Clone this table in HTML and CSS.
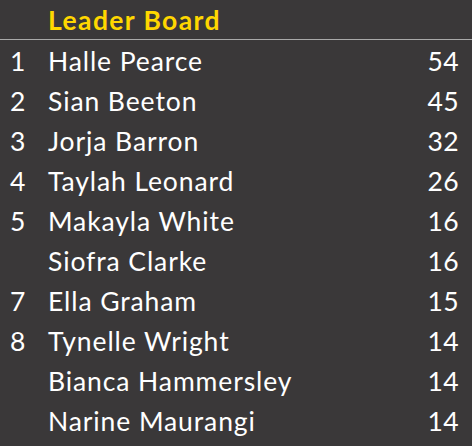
FILE: index.html
```html
<!DOCTYPE html>
<html>
<head>
<meta charset="utf-8">
<link rel="stylesheet" href="styles.css">
</head>
<body>
<div class="board">
  <div class="header"><span class="title">Leader Board</span></div>
  <div class="row"><span class="rank">1</span><span class="name">Halle Pearce</span><span class="score">54</span></div>
  <div class="row"><span class="rank">2</span><span class="name">Sian Beeton</span><span class="score">45</span></div>
  <div class="row"><span class="rank">3</span><span class="name">Jorja Barron</span><span class="score">32</span></div>
  <div class="row"><span class="rank">4</span><span class="name">Taylah Leonard</span><span class="score">26</span></div>
  <div class="row"><span class="rank">5</span><span class="name">Makayla White</span><span class="score">16</span></div>
  <div class="row"><span class="rank"></span><span class="name">Siofra Clarke</span><span class="score">16</span></div>
  <div class="row"><span class="rank">7</span><span class="name">Ella Graham</span><span class="score">15</span></div>
  <div class="row"><span class="rank">8</span><span class="name">Tynelle Wright</span><span class="score">14</span></div>
  <div class="row"><span class="rank"></span><span class="name">Bianca Hammersley</span><span class="score">14</span></div>
  <div class="row"><span class="rank"></span><span class="name">Narine Maurangi</span><span class="score">14</span></div>
</div>
</body>
</html>
```
FILE: styles.css
```css
html, body {
  margin: 0;
  padding: 0;
  background: #3a3839;
}
.board {
  width: 472px;
  height: 446px;
  background: #3a3839;
  font-family: Lato, "Open Sans", sans-serif;
  font-size: 26.5px;
  letter-spacing: 0.9px;
  color: #ffffff;
}
.header {
  height: 39px;
  border-bottom: 1px solid #a9a9a9;
  box-sizing: content-box;
  display: flex;
  align-items: center;
  padding-left: 48px;
  padding-top: 1px;
  box-sizing: border-box;
  height: 40px;
}
.title {
  color: #ffd700;
  font-weight: bold;
  letter-spacing: 1.4px;
}
.row {
  display: grid;
  grid-template-columns: 38px 1fr auto;
  height: 40px;
  align-items: center;
  padding: 2px 13px 0 10px;
  box-sizing: border-box;
}
.score {
  text-align: right;
  letter-spacing: 0.4px;
}
```
